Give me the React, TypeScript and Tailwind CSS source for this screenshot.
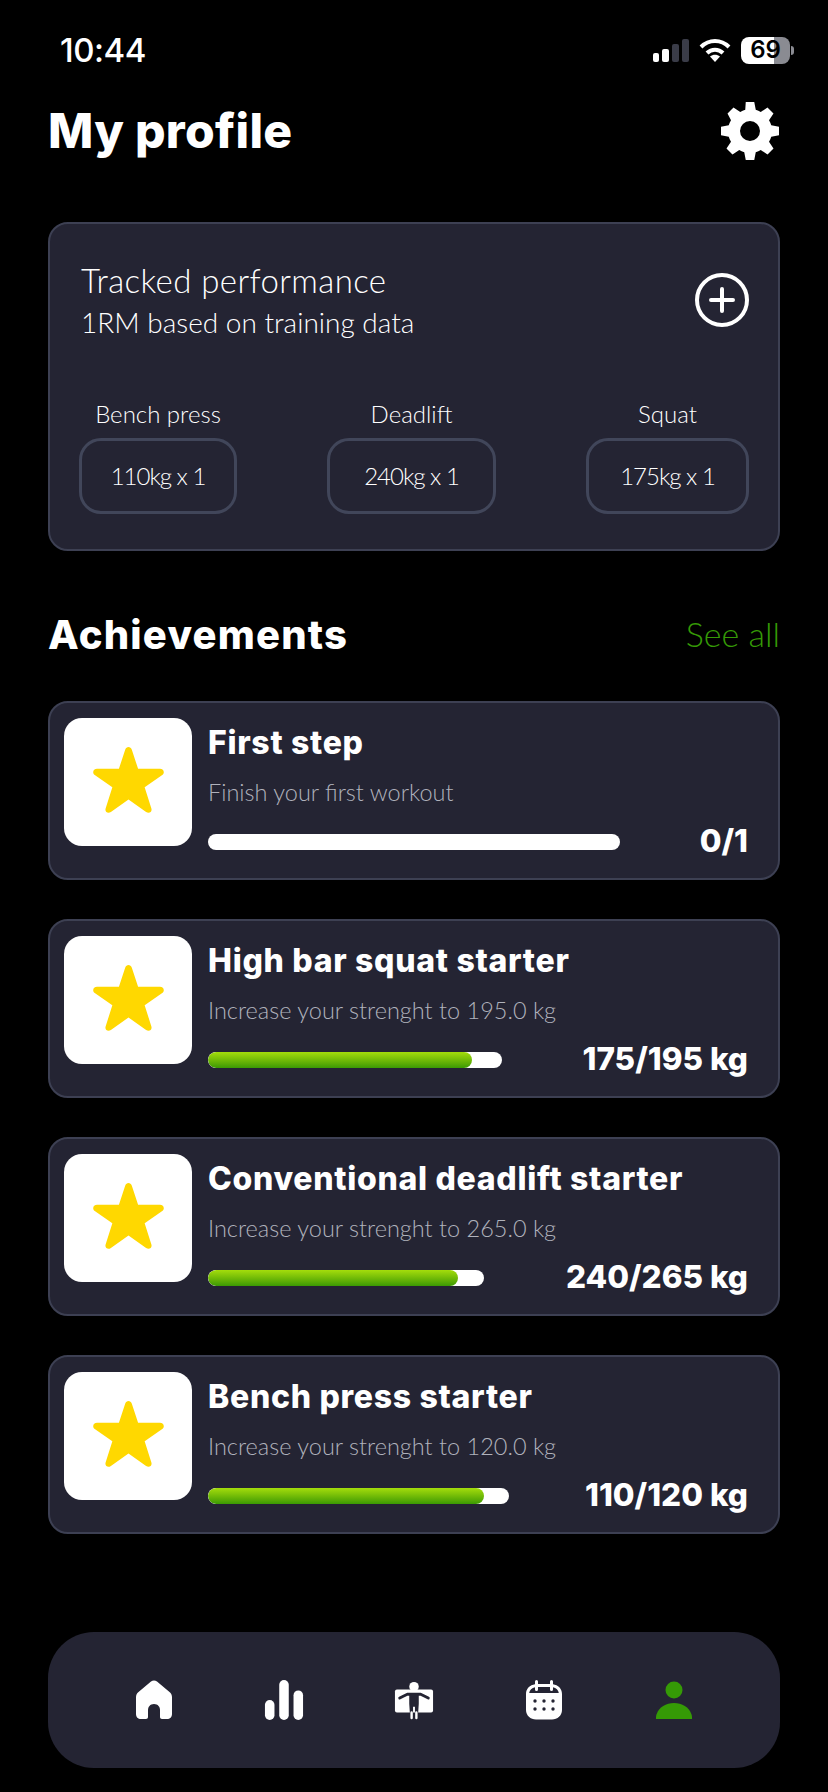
import React from "react";

const lifts = [
  { name: "Bench press", value: "110kg x 1", width: "w-[158px]" },
  { name: "Deadlift", value: "240kg x 1", width: "w-[169px]" },
  { name: "Squat", value: "175kg x 1", width: "w-[163px]" },
];

const achievements = [
  { title: "First step", desc: "Finish your first workout", track: "w-[412px]", fill: "w-0", score: "0/1" },
  { title: "High bar squat starter", desc: "Increase your strenght to 195.0 kg", track: "w-[294px]", fill: "w-[264px]", score: "175/195 kg" },
  { title: "Conventional deadlift starter", desc: "Increase your strenght to 265.0 kg", track: "w-[276px]", fill: "w-[250px]", score: "240/265 kg" },
  { title: "Bench press starter", desc: "Increase your strenght to 120.0 kg", track: "w-[301px]", fill: "w-[276px]", score: "110/120 kg" },
];

function StatusBar() {
  return (
    <div className="flex h-[100px] items-center justify-between pl-[60px] pr-[34px] text-white">
      <span className="font-['Inter'] text-[33px] leading-none font-medium tracking-[-0.5px]">10:44</span>
      <div className="flex items-center">
        <div className="flex h-[23px] items-end gap-[3px]">
          <span className="h-[9px] w-[6px] rounded-[2px] bg-white" />
          <span className="h-[13px] w-[7px] rounded-[2px] bg-white" />
          <span className="h-[18px] w-[7px] rounded-[2px] bg-[#3a3c48]" />
          <span className="h-[23px] w-[7px] rounded-[2px] bg-[#3a3c48]" />
        </div>
        <svg className="ml-[10px]" width="32" height="24" viewBox="0 0 32 24" fill="none" stroke="white" strokeWidth="4">
          <path d="M2 9 C10 1 22 1 30 9" />
          <path d="M8 15 C12.5 10.5 19.5 10.5 24 15" />
          <path d="M16 24 L11 18.5 C14 16 18 16 21 18.5 Z" fill="white" stroke="none" />
        </svg>
        <div className="ml-[10px] flex h-[27px] w-[49px] items-center justify-center rounded-[8px] bg-[linear-gradient(90deg,#ffffff_67%,#8a8b92_67%)] font-['Inter'] text-[24px] leading-none font-semibold text-black">
          69
        </div>
        <span className="ml-[1px] h-[9px] w-[3px] rounded-r-full bg-[#8a8b92]" />
      </div>
    </div>
  );
}

function Gear() {
  return (
    <svg width="60" height="60" viewBox="0 0 24 24" fill="white">
      <path
        fillRule="evenodd"
        d="M10.3 0.4h3.4l.6 3.1c.7.2 1.4.5 2 .9l2.7-1.8 2.4 2.4-1.8 2.7c.4.6.7 1.3.9 2l3.1.6v3.4l-3.1.6c-.2.7-.5 1.4-.9 2l1.8 2.7-2.4 2.4-2.7-1.8c-.6.4-1.3.7-2 .9l-.6 3.1h-3.4l-.6-3.1c-.7-.2-1.4-.5-2-.9l-2.7 1.8-2.4-2.4 1.8-2.7c-.4-.6-.7-1.3-.9-2l-3.1-.6v-3.4l3.1-.6c.2-.7.5-1.4.9-2L3 5l2.4-2.4 2.7 1.8c.6-.4 1.3-.7 2-.9zM12 8a4 4 0 1 0 0 8 4 4 0 0 0 0-8z"
      />
    </svg>
  );
}

function PlusCircle() {
  return (
    <svg width="54" height="54" viewBox="0 0 54 54" fill="none" stroke="white" strokeWidth="4" strokeLinecap="round">
      <circle cx="27" cy="27" r="25" />
      <path d="M27 16v22M16 27h22" />
    </svg>
  );
}

function Star() {
  return (
    <svg width="75" height="73" viewBox="0 0 72 70" fill="#ffd800">
      <path d="M32.8 3.5c1.2-3.6 5.2-3.6 6.4 0l6 18.4h21c3.6 0 5 3.8 2.2 5.8L51.5 39.6l6.4 20.1c1.2 3.6-2.2 5.6-5 3.6L36 51.4 19.1 63.3c-2.8 2-6.2 0-5-3.6l6.4-20.1L3.6 27.7c-2.8-2-1.4-5.8 2.2-5.8h21z" />
    </svg>
  );
}

function AchievementCard({ item }: { item: (typeof achievements)[number] }) {
  return (
    <div className="flex h-[179px] items-start gap-[16px] rounded-[20px] border-2 border-[#3d4053] bg-[#242433] pt-[15px] pr-[30px] pl-[14px]">
      <div className="flex h-[128px] w-[128px] shrink-0 items-center justify-center rounded-[18px] bg-white">
        <Star />
      </div>
      <div className="flex min-w-0 flex-1 flex-col">
        <div className="mt-[4px] h-[42px] font-['Inter'] text-[32px] leading-[42px] font-extrabold tracking-[0.7px] whitespace-nowrap text-white">{item.title}</div>
        <div className="mt-[13px] h-[30px] text-[23.5px] leading-[30px] font-light text-[#b0b2bc]">{item.desc}</div>
        <div className="mt-[15px] flex h-[40px] items-center justify-between">
          <div className={`h-[16px] overflow-hidden rounded-full bg-white ${item.track}`}>
            <div className={`h-full rounded-full bg-gradient-to-b from-[#a4dd0c] to-[#3a9a04] ${item.fill}`} />
          </div>
          <span className="mb-[3px] font-['Inter'] text-[31.5px] leading-none font-extrabold text-white">{item.score}</span>
        </div>
      </div>
    </div>
  );
}

function HomeIcon() {
  return (
    <svg width="38" height="40" viewBox="0 0 38 40" fill="white">
      <path d="M16 1.5c1.8-1.5 4.2-1.5 6 0l12.5 10.5c1.6 1.3 2.5 3 2.5 5.2V34c0 3-2 5-5 5h-5c-1.2 0-2-.8-2-2v-7c0-3-2-6-6-6s-6 3-6 6v7c0 1.2-.8 2-2 2H6c-3 0-5-2-5-5V17.200c0-2.200.9-3.900 2.500-5.200z" />
    </svg>
  );
}

function BarsIcon() {
  return (
    <svg width="42" height="42" viewBox="0 0 42 42" fill="white">
      <rect x="1" y="21" width="10" height="21" rx="5" />
      <rect x="16" y="0" width="10" height="42" rx="5" />
      <rect x="31" y="11" width="10" height="31" rx="5" />
    </svg>
  );
}

function BodyIcon() {
  return (
    <svg width="42" height="40" viewBox="0 0 42 40" fill="none">
      <rect x="1" y="9" width="40" height="24" rx="2" fill="white" />
      <circle cx="21" cy="6" r="5" fill="white" />
      <path d="M6 18 L14 14 H28 L36 18" stroke="#242433" strokeWidth="3" strokeLinecap="round" strokeLinejoin="round" />
      <path d="M16 14 H26 V24 L25 39 H22 V27 H20 V39 H17 L16 24 Z" fill="#242433" />
      <path d="M18.500 33 V39 M23.500 33 V39" stroke="white" strokeWidth="2.500" strokeLinecap="round" />
    </svg>
  );
}

function CalendarIcon() {
  return (
    <svg width="36" height="40" viewBox="0 0 36 40" fill="white">
      <path
        fillRule="evenodd"
        d="M9 1.500a1.500 1.500 0 0 1 3 0V4h12V1.500a1.500 1.500 0 0 1 3 0V4.200c5 .7 9 4.300 9 9.800v16c0 5.500-4.500 9.500-10 9.500H10C4.500 39.500 0 35.500 0 30V14C0 8.500 4 4.900 9 4.200zM12 7H24V9.500a1.500 1.500 0 0 0 3 0V7.300c3 .6 5.500 2.800 5.800 5.700H3.200C3.500 10.100 6 7.900 9 7.300V9.500a1.500 1.500 0 0 0 3 0z"
      />
      <g fill="#242433">
        <circle cx="9" cy="21" r="1.700" />
        <circle cx="18" cy="21" r="1.700" />
        <circle cx="27" cy="21" r="1.700" />
        <circle cx="9" cy="29" r="1.700" />
        <circle cx="18" cy="29" r="1.700" />
        <circle cx="27" cy="29" r="1.700" />
      </g>
    </svg>
  );
}

function PersonIcon() {
  return (
    <svg width="36" height="38" viewBox="0 0 36 38" fill="#359a06">
      <circle cx="18" cy="9" r="8.500" />
      <path d="M0 38c0-2 0-3 .500-4.500C3 26 10 22 18 22s15 4 17.500 11.500c.5 1.500.5 2.500.5 4.500z" />
    </svg>
  );
}

const navIcons = [HomeIcon, BarsIcon, BodyIcon, CalendarIcon, PersonIcon];

export default function App() {
  return (
    <div className="h-[1792px] w-[828px] overflow-hidden bg-black font-['Lato',sans-serif] text-white">
      <StatusBar />

      <div className="flex items-center justify-between px-[48px]">
        <h1 className="font-['Inter'] text-[48px] leading-[62px] font-extrabold tracking-[0.3px]">My profile</h1>
        <Gear />
      </div>

      {/* Tracked performance */}
      <section className="mx-[48px] mt-[60px] h-[329px] rounded-[20px] border-2 border-[#3d4053] bg-[#242433] pt-[34px] pr-[29px] pl-[29px]">
        <div className="flex items-center justify-between">
          <div className="pl-[2px]">
            <div className="text-[33px] leading-[44px] font-light tracking-[0.4px]">Tracked performance</div>
            <div className="text-[28px] leading-[40px] font-light">1RM based on training data</div>
          </div>
          <PlusCircle />
        </div>
        <div className="mt-[54px] flex justify-between">
          {lifts.map((lift) => (
            <div key={lift.name} className={`flex flex-col items-center ${lift.width}`}>
              <div className="text-[24px] leading-[36px] font-light">{lift.name}</div>
              <div className="mt-[6px] flex h-[76px] w-full items-center justify-center rounded-[22px] border-[3px] border-[#41465a] text-[24px] font-light tracking-[-1px]">
                {lift.value}
              </div>
            </div>
          ))}
        </div>
      </section>

      {/* Achievements */}
      <div className="mx-[48px] mt-[40px] flex h-[84px] items-center justify-between">
        <h2 className="pt-[3px] font-['Inter'] text-[40px] font-extrabold tracking-[1.2px]">Achievements</h2>
        <span className="text-[34px] font-light text-[#359a06]">See all</span>
      </div>
      <div className="mx-[48px] mt-[26px] flex flex-col gap-[39px]">
        {achievements.map((item) => (
          <AchievementCard key={item.title} item={item} />
        ))}
      </div>

      {/* Bottom nav */}
      <nav className="mx-[48px] mt-[98px] flex h-[136px] items-center justify-between rounded-[46px] bg-[#242433] px-[86px]">
        {navIcons.map((Icon, i) => (
          <div key={i} className="flex w-[40px] justify-center">
            <Icon />
          </div>
        ))}
      </nav>
    </div>
  );
}
